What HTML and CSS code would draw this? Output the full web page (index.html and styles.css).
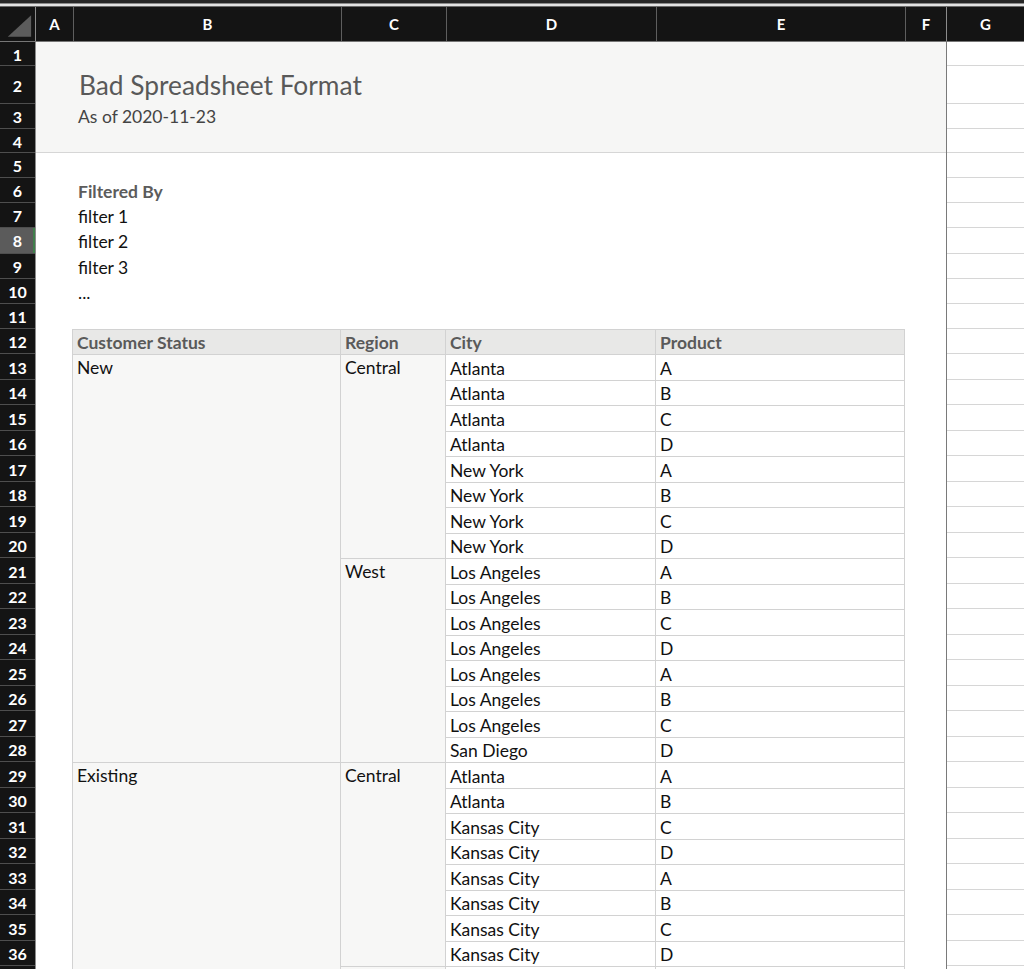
FILE: index.html
```html
<!DOCTYPE html>
<html>
<head>
<meta charset="utf-8">
<title>Bad Spreadsheet Format</title>
<link rel="stylesheet" href="styles.css">
</head>
<body>
<div class="topbar"></div>
<div class="colheads">
  <div class="ch corner"><svg width="36" height="35" viewBox="0 0 36 35"><polygon points="8,30 32,30 32,8" fill="#5c5c5c"/></svg></div>
  <div class="ch c-a">A</div>
  <div class="ch c-b">B</div>
  <div class="ch c-c">C</div>
  <div class="ch c-d">D</div>
  <div class="ch c-e">E</div>
  <div class="ch c-f">F</div>
  <div class="ch c-g">G</div>
</div>
<div class="sheet">
  <div class="rowheads">
    <div class="rh">1</div><div class="rh">2</div><div class="rh">3</div><div class="rh">4</div>
    <div class="rh">5</div><div class="rh">6</div><div class="rh">7</div><div class="rh sel">8</div>
    <div class="rh">9</div><div class="rh">10</div><div class="rh">11</div><div class="rh">12</div>
    <div class="rh">13</div><div class="rh">14</div><div class="rh">15</div><div class="rh">16</div>
    <div class="rh">17</div><div class="rh">18</div><div class="rh">19</div><div class="rh">20</div>
    <div class="rh">21</div><div class="rh">22</div><div class="rh">23</div><div class="rh">24</div>
    <div class="rh">25</div><div class="rh">26</div><div class="rh">27</div><div class="rh">28</div>
    <div class="rh">29</div><div class="rh">30</div><div class="rh">31</div><div class="rh">32</div>
    <div class="rh">33</div><div class="rh">34</div><div class="rh">35</div><div class="rh">36</div>
    <div class="rh"></div>
  </div>
  <div class="canvas">
    <div class="band"></div>
    <div class="title">Bad Spreadsheet Format</div>
    <div class="asof">As of 2020-11-23</div>
    <div class="txt fby">Filtered By</div>
    <div class="txt f1">filter 1</div>
    <div class="txt f2">filter 2</div>
    <div class="txt f3">filter 3</div>
    <div class="txt f4">...</div>
    <div class="tbl">
      <div class="hd">Customer Status</div><div class="hd">Region</div><div class="hd">City</div><div class="hd">Product</div>
      <div class="m span16">New</div><div class="m span8">Central</div><div class="c">Atlanta</div><div class="c">A</div>
      <div class="c">Atlanta</div><div class="c">B</div>
      <div class="c">Atlanta</div><div class="c">C</div>
      <div class="c">Atlanta</div><div class="c">D</div>
      <div class="c">New York</div><div class="c">A</div>
      <div class="c">New York</div><div class="c">B</div>
      <div class="c">New York</div><div class="c">C</div>
      <div class="c">New York</div><div class="c">D</div>
      <div class="m span8">West</div><div class="c">Los Angeles</div><div class="c">A</div>
      <div class="c">Los Angeles</div><div class="c">B</div>
      <div class="c">Los Angeles</div><div class="c">C</div>
      <div class="c">Los Angeles</div><div class="c">D</div>
      <div class="c">Los Angeles</div><div class="c">A</div>
      <div class="c">Los Angeles</div><div class="c">B</div>
      <div class="c">Los Angeles</div><div class="c">C</div>
      <div class="c">San Diego</div><div class="c">D</div>
      <div class="m span16">Existing</div><div class="m span8">Central</div><div class="c">Atlanta</div><div class="c">A</div>
      <div class="c">Atlanta</div><div class="c">B</div>
      <div class="c">Kansas City</div><div class="c">C</div>
      <div class="c">Kansas City</div><div class="c">D</div>
      <div class="c">Kansas City</div><div class="c">A</div>
      <div class="c">Kansas City</div><div class="c">B</div>
      <div class="c">Kansas City</div><div class="c">C</div>
      <div class="c">Kansas City</div><div class="c">D</div>
      <div class="m span8"></div><div class="c"></div><div class="c"></div>
    </div>
  </div>
  <div class="gcol">
    <div class="gc"></div><div class="gc"></div><div class="gc"></div><div class="gc"></div>
    <div class="gc"></div><div class="gc"></div><div class="gc"></div><div class="gc"></div>
    <div class="gc"></div><div class="gc"></div><div class="gc"></div><div class="gc"></div>
    <div class="gc"></div><div class="gc"></div><div class="gc"></div><div class="gc"></div>
    <div class="gc"></div><div class="gc"></div><div class="gc"></div><div class="gc"></div>
    <div class="gc"></div><div class="gc"></div><div class="gc"></div><div class="gc"></div>
    <div class="gc"></div><div class="gc"></div><div class="gc"></div><div class="gc"></div>
    <div class="gc"></div><div class="gc"></div><div class="gc"></div><div class="gc"></div>
    <div class="gc"></div><div class="gc"></div><div class="gc"></div><div class="gc"></div>
    <div class="gc"></div>
  </div>
</div>
</body>
</html>
```
FILE: styles.css
```css
* { box-sizing: border-box; }
html, body {
  margin: 0;
  padding: 0;
  height: 969px;
  overflow: hidden;
  background: #ffffff;
  font-family: "Lato", "Open Sans", sans-serif;
}

.topbar {
  height: 7px;
  background: linear-gradient(to bottom, #262626 0, #262626 3px, #8a8a8a 3px, #8a8a8a 4px, #e2e2e2 4px, #e2e2e2 6px, #6a6a6a 6px, #6a6a6a 7px);
}

.colheads {
  display: flex;
  height: 35px;
  background: #141414;
  border-bottom: 1px solid #767676;
}
.ch {
  display: flex;
  align-items: center;
  justify-content: center;
  color: #ffffff;
  font-size: 15px;
  font-weight: 700;
  border-right: 1px solid #5e5e5e;
  flex: none;
}
.corner { width: 36px; border-right: 1px solid #8c8c8c; }
.c-a { width: 38px; }
.c-b { width: 268px; }
.c-c { width: 105px; }
.c-d { width: 210px; }
.c-e { width: 249px; }
.c-f { width: 41px; border-right: 1px solid #8c8c8c; }
.c-g { flex: 1; border-right: none; }

.sheet {
  display: flex;
  --rows: 24px 38px 25px 24px repeat(7, 25.14px) repeat(26, 25.5px);
}

.rowheads {
  width: 36px;
  flex: none;
  display: grid;
  grid-template-rows: var(--rows);
  background: #141414;
  border-right: 1px solid #8c8c8c;
}
.rh {
  display: flex;
  align-items: center;
  justify-content: center;
  color: #ffffff;
  font-size: 16px;
  font-weight: 700;
  border-bottom: 1px solid #4e4e4e;
  padding-top: 1px;
}
.rh.sel {
  background: #5b5b5b;
  box-shadow: inset -2px 0 0 #3f7f4b;
}

.canvas {
  width: 911px;
  flex: none;
  display: grid;
  grid-template-columns: 37px 268px 105px 210px 249px 41px;
  grid-template-rows: var(--rows);
  border-right: 1px solid #7a7a7a;
  color: #111111;
  font-size: 17.5px;
}
.band {
  grid-area: 1 / 1 / 5 / -1;
  background: #f6f6f5;
  border-bottom: 1px solid #d6d6d6;
}
.title {
  grid-area: 2 / 2 / 3 / 6;
  align-self: end;
  padding: 0 0 3px 6px;
  font-size: 26.3px;
  color: #595959;
}
.asof {
  grid-area: 3 / 2 / 4 / 6;
  align-self: center;
  padding-left: 5px;
  color: #444444;
}
.txt {
  grid-column: 2 / 5;
  align-self: center;
  padding: 2px 0 0 5px;
}
.fby { grid-row: 6; font-weight: 700; color: #5c5c5c; }
.f1 { grid-row: 7; }
.f2 { grid-row: 8; }
.f3 { grid-row: 9; }
.f4 { grid-row: 10; }

.tbl {
  grid-area: 12 / 2 / 38 / 6;
  display: grid;
  grid-template-columns: 268px 105px 210px 249px;
  grid-auto-rows: 25.5px;
  margin-left: -1px;
  border-top: 1px solid #d2d2d2;
  border-left: 1px solid #d2d2d2;
  align-self: start;
}
.tbl > div {
  display: flex;
  align-items: center;
  padding: 1px 0 0 4px;
  border-right: 1px solid #d2d2d2;
  border-bottom: 1px solid #d2d2d2;
  white-space: nowrap;
}
.hd {
  background: #e8e8e7;
  color: #5a5a5a;
  font-weight: 700;
}
.tbl > .m {
  background: #f7f7f6;
  align-items: flex-start;
  padding-top: 2px;
}
.span16 { grid-row: span 16; }
.span8 { grid-row: span 8; }
.c { background: #ffffff; }

.gcol {
  flex: 1;
  display: grid;
  grid-template-rows: var(--rows);
}
.gc {
  border-bottom: 1px solid #d6d6d6;
}
```
